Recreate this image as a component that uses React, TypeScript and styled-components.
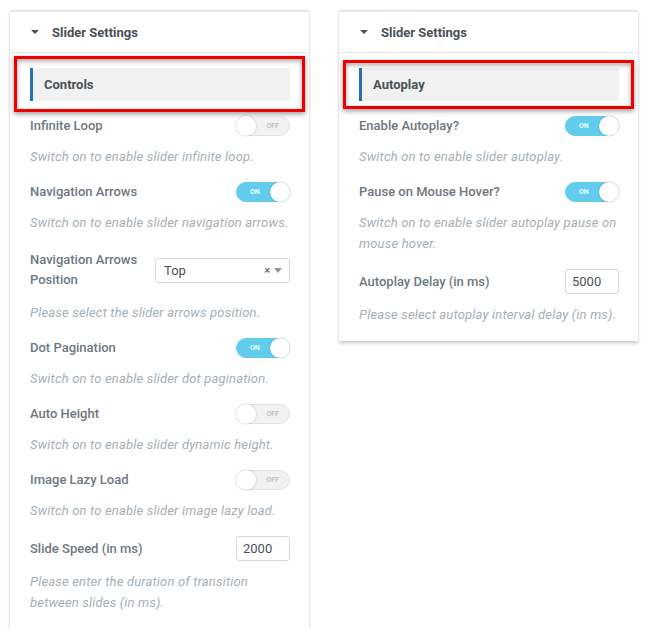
import React from 'react';
import styled, { createGlobalStyle } from 'styled-components';

const GlobalStyle = createGlobalStyle`
	body {
		margin: 0;
		background: #ffffff;
		font-family: Roboto, "Liberation Sans", Arial, sans-serif;
	}
`;

const Page = styled.div`
	display: flex;
	align-items: flex-start;
	gap: 30px;
	padding: 10px 0 0 10px;
`;

const Panel = styled.section`
	width: 299px;
	background: #ffffff;
	border-top: 2px solid #e6e9ec;
	box-shadow: 0 3px 3px rgba(0, 0, 0, 0.16), 0 0 2px rgba(0, 0, 0, 0.1);
	padding-bottom: 16px;
`;

const PanelHeader = styled.div`
	display: flex;
	align-items: center;
	gap: 13px;
	height: 40px;
	padding-left: 20px;
	border-bottom: 1px solid #e6e9ec;
	font-size: 13px;
	font-weight: 700;
	color: #495157;
	&::before {
		content: '';
		margin-left: 1px;
		border-left: 4px solid transparent;
		border-right: 4px solid transparent;
		border-top: 4px solid #495157;
	}
`;

const HeadingWrap = styled.div`
	position: relative;
	margin: 15px 19px 0 20px;
`;

const Heading = styled.div`
	height: 33px;
	display: flex;
	align-items: center;
	padding-left: 11px;
	background: #f1f1f1;
	border-left: 3px solid #2671b4;
	font-size: 13px;
	font-weight: 700;
	color: #495157;
`;

const Highlight = styled.div<{ $top: number; $bottom: number }>`
	position: absolute;
	top: -${({ $top }) => $top}px;
	bottom: -${({ $bottom }) => $bottom}px;
	left: -16px;
	right: -15px;
	border: 3px solid #ee0000;
	box-shadow: 0 2px 5px rgba(0, 0, 0, 0.4), inset 0 2px 5px rgba(0, 0, 0, 0.35);
	pointer-events: none;
`;

const Control = styled.div`
	padding: 15px 19px 0 20px;
`;

const Row = styled.div`
	display: flex;
	align-items: center;
	justify-content: space-between;
	min-height: 20px;
`;

const Label = styled.label<{ $narrow?: boolean }>`
	font-size: 13px;
	font-weight: 500;
	line-height: 20px;
	color: #6d7882;
	max-width: ${({ $narrow }) => ($narrow ? '115px' : 'none')};
	margin: ${({ $narrow }) => ($narrow ? '2px 0' : '0')};
`;

const Description = styled.p`
	margin: 10px 0 0;
	font-size: 13px;
	font-style: italic;
	letter-spacing: 0.18px;
	line-height: 21px;
	color: #a4afb7;
`;

const Switch = styled.span<{ $on: boolean }>`
	position: relative;
	box-sizing: border-box;
	width: 54px;
	height: 20px;
	border-radius: 10px;
	background: ${({ $on }) => ($on ? '#61ccec' : '#f1f1f1')};
	border: 1px solid ${({ $on }) => ($on ? '#61ccec' : '#e0e3e6')};
	display: flex;
	align-items: center;
	justify-content: ${({ $on }) => ($on ? 'flex-start' : 'flex-end')};
	padding: 0 ${({ $on }) => ($on ? '0 0 13px' : '10px 0 0')};
	font-size: 7px;
	font-weight: 500;
	color: ${({ $on }) => ($on ? '#ffffff' : '#b5bbc0')};
	&::after {
		content: '';
		position: absolute;
		top: -1px;
		${({ $on }) => ($on ? 'right: -1px;' : 'left: -1px;')}
		width: 20px;
		height: 20px;
		border-radius: 50%;
		background: #ffffff;
		box-shadow: 0 0 2px rgba(0, 0, 0, 0.25);
	}
`;

const Select = styled.div`
	box-sizing: border-box;
	width: 135px;
	height: 25px;
	border: 1px solid #d5dadf;
	border-radius: 3px;
	display: flex;
	align-items: center;
	padding: 0 7px 0 8px;
	font-size: 13px;
	color: #495157;
	span {
		flex: 1;
	}
	i {
		font-style: normal;
		font-size: 11px;
		font-weight: 700;
		color: #6d7882;
		margin-right: 4px;
	}
	b {
		border-left: 4px solid transparent;
		border-right: 4px solid transparent;
		border-top: 5px solid #8b949b;
	}
`;

const NumberInput = styled.div`
	box-sizing: border-box;
	width: 54px;
	height: 25px;
	border: 1px solid #d5dadf;
	border-radius: 3px;
	display: flex;
	align-items: center;
	padding-left: 6px;
	font-size: 13px;
	color: #495157;
`;

type Item = {
	label: string;
	desc: string;
	kind: 'switch' | 'select' | 'number';
	on?: boolean;
	value?: string;
	narrow?: boolean;
};

const controls: Item[] = [
	{ label: 'Infinite Loop', desc: 'Switch on to enable slider infinite loop.', kind: 'switch', on: false },
	{ label: 'Navigation Arrows', desc: 'Switch on to enable slider navigation arrows.', kind: 'switch', on: true },
	{ label: 'Navigation Arrows Position', desc: 'Please select the slider arrows position.', kind: 'select', value: 'Top', narrow: true },
	{ label: 'Dot Pagination', desc: 'Switch on to enable slider dot pagination.', kind: 'switch', on: true },
	{ label: 'Auto Height', desc: 'Switch on to enable slider dynamic height.', kind: 'switch', on: false },
	{ label: 'Image Lazy Load', desc: 'Switch on to enable slider image lazy load.', kind: 'switch', on: false },
	{ label: 'Slide Speed (in ms)', desc: 'Please enter the duration of transition between slides (in ms).', kind: 'number', value: '2000' },
];

const autoplay: Item[] = [
	{ label: 'Enable Autoplay?', desc: 'Switch on to enable slider autoplay.', kind: 'switch', on: true },
	{ label: 'Pause on Mouse Hover?', desc: 'Switch on to enable slider autoplay pause on mouse hover.', kind: 'switch', on: true },
	{ label: 'Autoplay Delay (in ms)', desc: 'Please select autoplay interval delay (in ms).', kind: 'number', value: '5000' },
];

function Field({ item }: { item: Item }) {
	return (
		<Control>
			<Row>
				<Label $narrow={item.narrow}>{item.label}</Label>
				{item.kind === 'switch' && <Switch $on={!!item.on}>{item.on ? 'ON' : 'OFF'}</Switch>}
				{item.kind === 'select' && (
					<Select>
						<span>{item.value}</span>
						<i>×</i>
						<b />
					</Select>
				)}
				{item.kind === 'number' && <NumberInput>{item.value}</NumberInput>}
			</Row>
			<Description>{item.desc}</Description>
		</Control>
	);
}

function SettingsPanel({ section, items, top, bottom }: { section: string; items: Item[]; top: number; bottom: number }) {
	return (
		<Panel>
			<PanelHeader>Slider Settings</PanelHeader>
			<HeadingWrap>
				<Heading>{section}</Heading>
				<Highlight $top={top} $bottom={bottom} />
			</HeadingWrap>
			{items.map((item) => (
				<Field key={item.label} item={item} />
			))}
		</Panel>
	);
}

export default function App() {
	return (
		<>
			<GlobalStyle />
			<Page>
				<SettingsPanel section="Controls" items={controls} top={12} bottom={11} />
				<SettingsPanel section="Autoplay" items={autoplay} top={8} bottom={8} />
			</Page>
		</>
	);
}
